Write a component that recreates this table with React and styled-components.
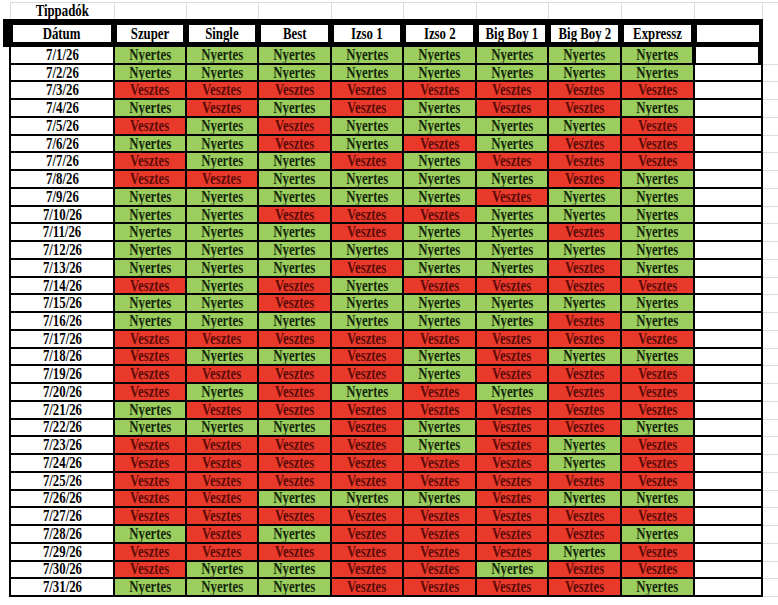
import { createGlobalStyle, styled } from "styled-components";

const GlobalStyle = createGlobalStyle`
  html, body {
    margin: 0;
    padding: 0;
    background: #fff;
    overflow: hidden;
  }
  body {
    font-family: "Liberation Serif", "Times New Roman", serif;
  }
`;

// column widths taken from the sheet, last one is the cut-off K column
const COLS = "104px 72px 72px 73px 72px 73px 72px 73px 73px 68px 40px";
const HEAD_COLS = "104px 72px 72px 73px 72px 73px 72px 73px 73px 68px";

const tippadok = ["Szuper", "Single", "Best", "Izso 1", "Izso 2", "Big Boy 1", "Big Boy 2", "Expressz"];

const eredmenyek = [
  "NNNNNNNN", "NNNNNNNN", "VVVVVVVV", "NVNVNVVN", "VNVNNNNV",
  "NNVNVNVV", "VNNVNVVV", "VVNNNNVN", "NNNNNVNN", "NNVVVNNN",
  "NNNVNNVN", "NNNNNNNN", "NNNVNNVN", "VNVNVVVV", "NNVNNNNN",
  "NNNNNNVN", "VVVVVVVV", "VNNVNVNN", "VVVVNVVV", "VNVNVNVV",
  "NVVVVVVV", "NNNVNVVN", "VVVVNVNV", "VVVVVVNV", "VVVVVVVV",
  "VVNNNVNN", "VVVVVVVV", "NVNVVVVN", "VVVVVVNV", "VNNVVNVV",
  "NNNVVVVN",
];

const Sheet = styled.div`
  padding-top: 2px;
  width: 800px;
  font-size: 16px;
  font-weight: bold;
  color: #000;
`;

// the sheet font is printed narrow, squeeze it like the original
const Label = styled.span`
  display: inline-block;
  transform: scaleX(0.8);
  white-space: nowrap;
  line-height: 14px;
`;

const TitleRow = styled.div`
  display: grid;
  grid-template-columns: ${COLS};
  height: 16px;
  margin-left: 10px;
  border-top: 1px solid #dcdcdc;
  border-left: 1px solid #dcdcdc;
`;

const TitleCell = styled.div`
  box-sizing: border-box;
  border-right: 1px solid #dcdcdc;
  display: flex;
  align-items: center;
  justify-content: center;
  overflow: visible;
`;

const HeaderRow = styled.div`
  display: grid;
  grid-template-columns: ${HEAD_COLS};
  width: max-content;
  margin-left: 3px;
  padding: 6px 0 5px 8px;
  background: #000;
`;

const HeaderCell = styled.div`
  height: 17px;
  margin: 0 4px 0 2px;
  background: #fff;
  display: flex;
  align-items: center;
  justify-content: center;
`;

const Body = styled.div`
  display: grid;
  grid-template-rows: repeat(31, minmax(0, 1fr));
  height: 550px;
  margin-left: 9px;
  border-left: 2px solid #000;
`;

const DataRow = styled.div`
  display: grid;
  grid-template-columns: ${COLS};
  min-height: 0;
`;

const Cell = styled.div`
  box-sizing: border-box;
  min-height: 0;
  border-right: 2px solid #000;
  border-bottom: 2px solid #000;
  display: flex;
  align-items: center;
  justify-content: center;
  background: ${(p) => (p.$win === undefined ? "#fff" : p.$win ? "#9bcd5f" : "#e8392b")};
  color: ${(p) => (p.$win === undefined ? "#000" : p.$win ? "#14270a" : "#5c0b07")};
`;

const FramedCell = styled.div`
  box-sizing: border-box;
  margin-left: -3px;
  margin-bottom: -1px;
  background: #fff;
  border-style: solid;
  border-color: #000;
  border-width: 0 5px 3px 4px;
`;

const GreyCell = styled.div`
  border-bottom: 1px solid #dcdcdc;
`;

const App = () => {
  return (
    <>
      <GlobalStyle />
      <Sheet>
        <TitleRow>
          <TitleCell><Label>Tippadók</Label></TitleCell>
          {Array.from({ length: 10 }).map((_, i) => (
            <TitleCell key={i} />
          ))}
        </TitleRow>

        <HeaderRow>
          <HeaderCell><Label>Dátum</Label></HeaderCell>
          {tippadok.map((t) => (
            <HeaderCell key={t}><Label>{t}</Label></HeaderCell>
          ))}
          <HeaderCell />
        </HeaderRow>

        <Body>
          {eredmenyek.map((sor, i) => (
            <DataRow key={i}>
              <Cell><Label>{`7/${i + 1}/26`}</Label></Cell>
              {sor.split("").map((e, j) => (
                <Cell key={j} $win={e === "N"}>
                  <Label>{e === "N" ? "Nyertes" : "Vesztes"}</Label>
                </Cell>
              ))}
              {i === 0 ? <FramedCell /> : <Cell />}
              <GreyCell />
            </DataRow>
          ))}
        </Body>
      </Sheet>
    </>
  );
};

export default App;
